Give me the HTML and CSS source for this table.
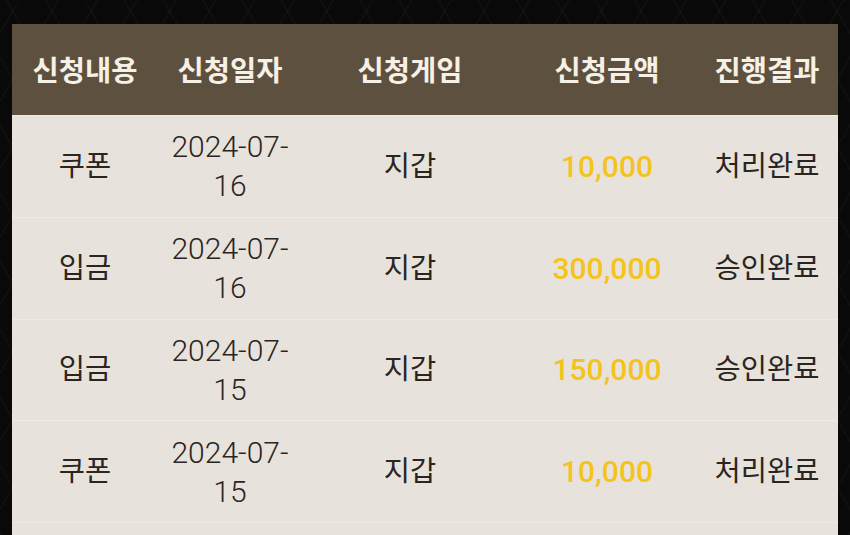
FILE: index.html
```html
<!DOCTYPE html>
<html lang="ko">
<head>
<meta charset="utf-8">
<link rel="stylesheet" href="styles.css">
</head>
<body>
<div class="page">
  <div class="table">
    <div class="row head">
      <div class="cell">신청내용</div>
      <div class="cell">신청일자</div>
      <div class="cell">신청게임</div>
      <div class="cell">신청금액</div>
      <div class="cell">진행결과</div>
    </div>
    <div class="row">
      <div class="cell">쿠폰</div>
      <div class="cell date">2024-07-16</div>
      <div class="cell">지갑</div>
      <div class="cell amount">10,000</div>
      <div class="cell">처리완료</div>
    </div>
    <div class="row">
      <div class="cell">입금</div>
      <div class="cell date">2024-07-16</div>
      <div class="cell">지갑</div>
      <div class="cell amount">300,000</div>
      <div class="cell">승인완료</div>
    </div>
    <div class="row">
      <div class="cell">입금</div>
      <div class="cell date">2024-07-15</div>
      <div class="cell">지갑</div>
      <div class="cell amount">150,000</div>
      <div class="cell">승인완료</div>
    </div>
    <div class="row">
      <div class="cell">쿠폰</div>
      <div class="cell date">2024-07-15</div>
      <div class="cell">지갑</div>
      <div class="cell amount">10,000</div>
      <div class="cell">처리완료</div>
    </div>
    <div class="row spacer"></div>
  </div>
</div>
</body>
</html>
```
FILE: styles.css
```css
html, body {
  margin: 0;
  padding: 0;
  height: 100%;
  overflow: hidden;
}
body {
  background-color: #0a0909;
  background-image:
    repeating-linear-gradient(60deg, rgba(255,255,255,0.025) 0 2px, transparent 2px 34px),
    repeating-linear-gradient(-60deg, rgba(255,255,255,0.025) 0 2px, transparent 2px 34px);
  font-family: "Roboto", "Noto Sans CJK KR", sans-serif;
}
.page {
  padding: 24px 12px 0 12px;
}
.table {
  width: 826px;
  background: #e8e2dc;
}
.row {
  display: grid;
  grid-template-columns: 146px 144px 216px 178px 142px;
  height: 101.8px;
  border-top: 1px solid #eee9e3;
  box-sizing: border-box;
}
.row.head {
  height: 91px;
  background: #5e503f;
  border-top: none;
  padding-top: 4px;
}
.row.spacer {
  height: 40px;
}
.cell {
  display: flex;
  align-items: center;
  justify-content: center;
  text-align: center;
  font-size: 28.5px;
  color: #2b2521;
  line-height: 39px;
}
.head .cell {
  color: #f6f0e6;
  font-weight: 700;
  font-size: 28.5px;
}
.date {
  font-size: 30px;
  font-weight: 300;
  padding: 0 12px;
}
.amount {
  font-size: 30px;
  font-weight: 500;
  color: #f4c31c;
}
```
